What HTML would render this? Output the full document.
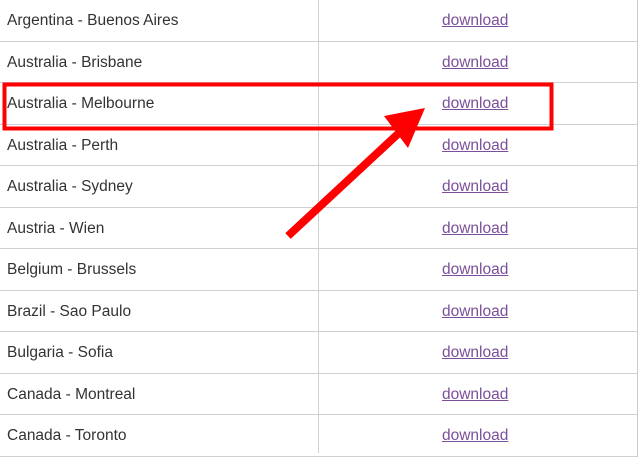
<!DOCTYPE html>
<html><head><style>
body{margin:0;width:639px;height:453px;overflow:hidden;background:#fff;font-family:"Liberation Sans",sans-serif;}
.t{position:absolute;left:0;top:0;width:637px;border-right:1px solid #ccc;}
.r{height:41.5px;border-bottom:1px solid #d0d0d0;box-sizing:border-box;position:relative;font-size:15.5px;color:#333;}
.r span{position:absolute;left:7px;top:12px;}
.r a{position:absolute;left:442px;top:12px;color:#7b4f9a;text-decoration:underline;}
.v{position:absolute;left:318px;top:0;width:1px;height:453px;background:#d0d0d0;}
</style></head><body>
<div class="t">
<div class="r"><span>Argentina - Buenos Aires</span><a>download</a></div>
<div class="r"><span>Australia - Brisbane</span><a>download</a></div>
<div class="r"><span>Australia - Melbourne</span><a>download</a></div>
<div class="r"><span>Australia - Perth</span><a>download</a></div>
<div class="r"><span>Australia - Sydney</span><a>download</a></div>
<div class="r"><span>Austria - Wien</span><a>download</a></div>
<div class="r"><span>Belgium - Brussels</span><a>download</a></div>
<div class="r"><span>Brazil - Sao Paulo</span><a>download</a></div>
<div class="r"><span>Bulgaria - Sofia</span><a>download</a></div>
<div class="r"><span>Canada - Montreal</span><a>download</a></div>
<div class="r"><span>Canada - Toronto</span><a>download</a></div>
</div>
<div class="v"></div>
<svg width="639" height="453" style="position:absolute;left:0;top:0">
<rect x="4.5" y="84.5" width="547" height="44" fill="none" stroke="#f00" stroke-width="4"/>
<line x1="288" y1="236" x2="400" y2="132" stroke="#f00" stroke-width="8"/>
<polygon points="425,108 384,116 408,148" fill="#f00"/>
</svg>
</body></html>
